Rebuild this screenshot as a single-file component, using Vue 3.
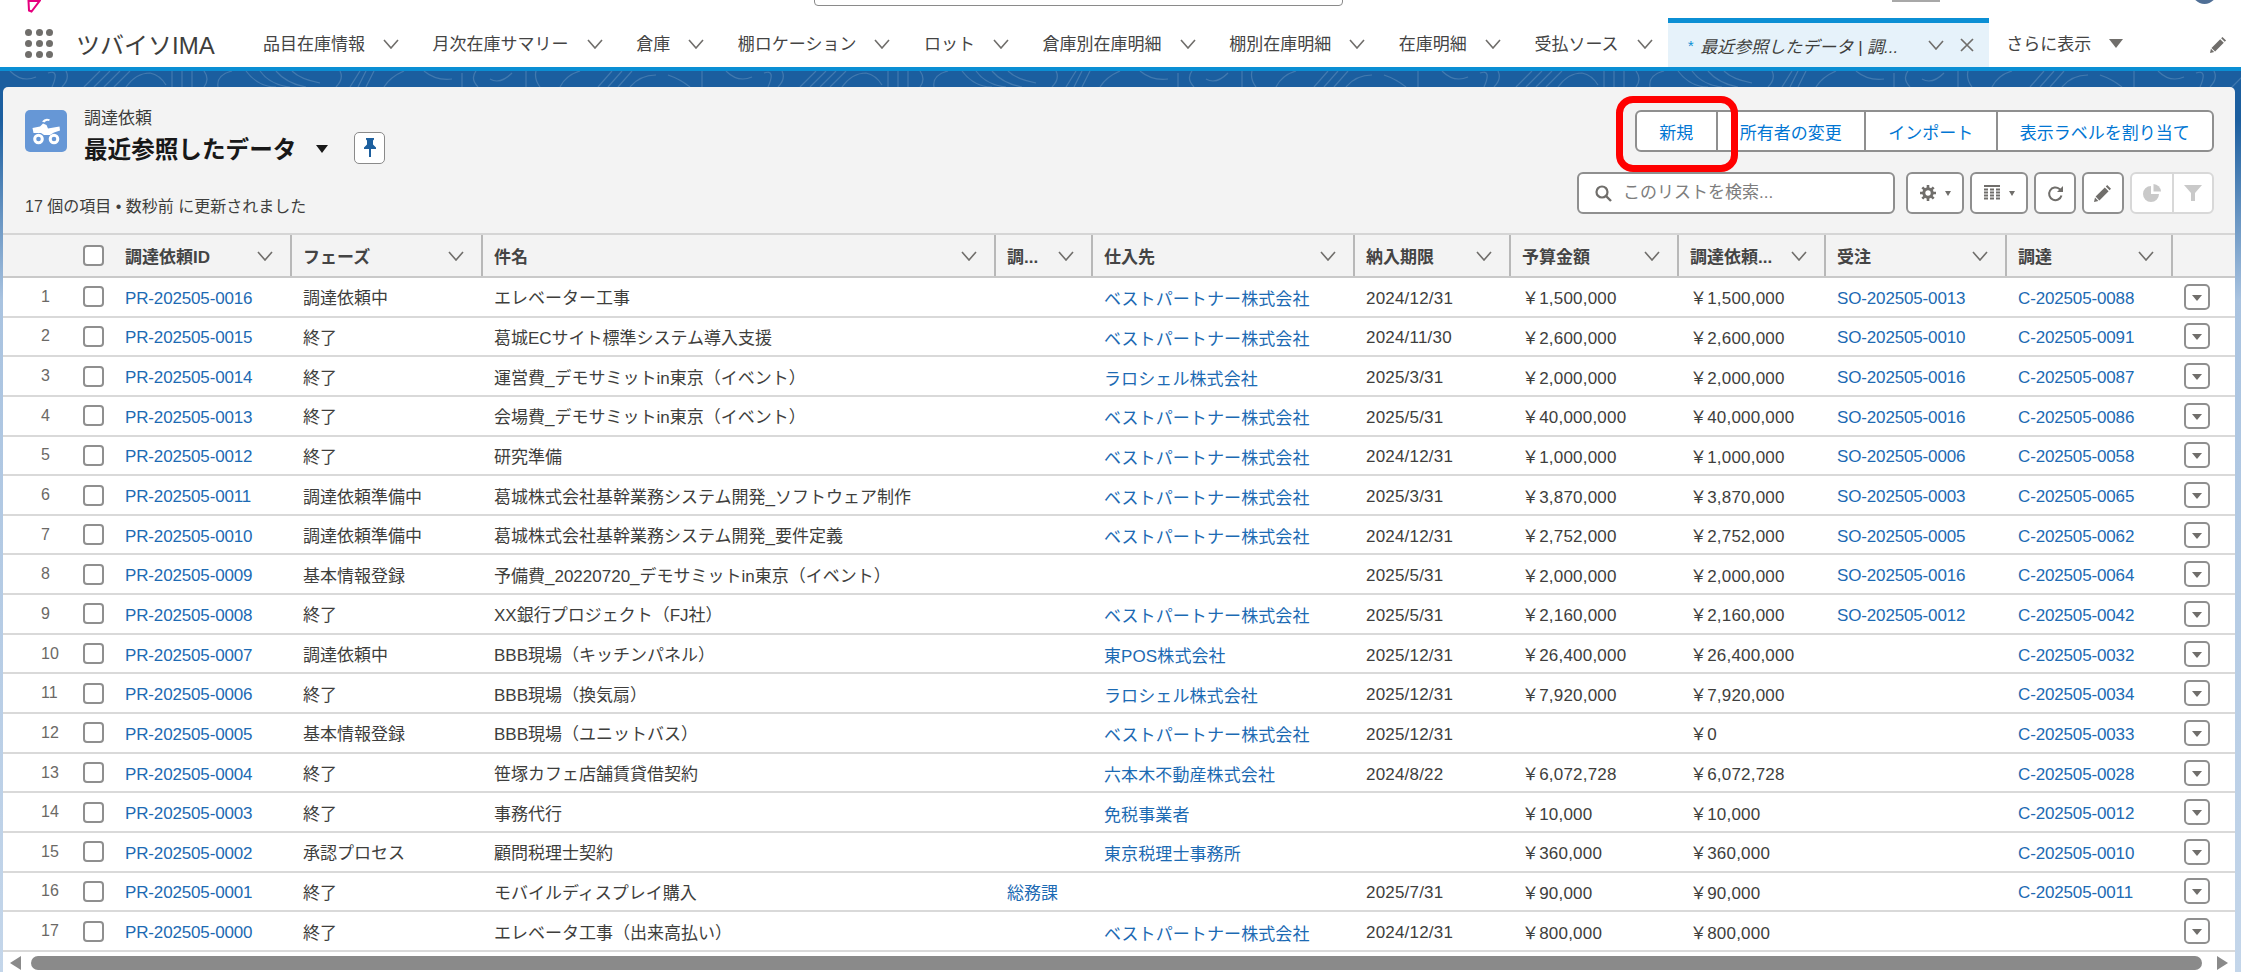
<script setup>
const navItems = ['品目在庫情報', '月次在庫サマリー', '倉庫', '棚ロケーション', 'ロット', '倉庫別在庫明細', '棚別在庫明細', '在庫明細', '受払ソース']

const columns = ['調達依頼ID', 'フェーズ', '件名', '調...', '仕入先', '納入期限', '予算金額', '調達依頼...', '受注', '調達']

const BEST = 'ベストパートナー株式会社'
const ROCH = 'ラロシェル株式会社'

// id, phase, subject, dept, vendor, due, budget, amount, order, contract
const rows = [
  ['0016', '調達依頼中', 'エレベーター工事', '', BEST, '2024/12/31', '1,500,000', '1,500,000', '0013', '0088'],
  ['0015', '終了', '葛城ECサイト標準システム導入支援', '', BEST, '2024/11/30', '2,600,000', '2,600,000', '0010', '0091'],
  ['0014', '終了', '運営費_デモサミットin東京（イベント）', '', ROCH, '2025/3/31', '2,000,000', '2,000,000', '0016', '0087'],
  ['0013', '終了', '会場費_デモサミットin東京（イベント）', '', BEST, '2025/5/31', '40,000,000', '40,000,000', '0016', '0086'],
  ['0012', '終了', '研究準備', '', BEST, '2024/12/31', '1,000,000', '1,000,000', '0006', '0058'],
  ['0011', '調達依頼準備中', '葛城株式会社基幹業務システム開発_ソフトウェア制作', '', BEST, '2025/3/31', '3,870,000', '3,870,000', '0003', '0065'],
  ['0010', '調達依頼準備中', '葛城株式会社基幹業務システム開発_要件定義', '', BEST, '2024/12/31', '2,752,000', '2,752,000', '0005', '0062'],
  ['0009', '基本情報登録', '予備費_20220720_デモサミットin東京（イベント）', '', '', '2025/5/31', '2,000,000', '2,000,000', '0016', '0064'],
  ['0008', '終了', 'XX銀行プロジェクト（FJ社）', '', BEST, '2025/5/31', '2,160,000', '2,160,000', '0012', '0042'],
  ['0007', '調達依頼中', 'BBB現場（キッチンパネル）', '', '東POS株式会社', '2025/12/31', '26,400,000', '26,400,000', '', '0032'],
  ['0006', '終了', 'BBB現場（換気扇）', '', ROCH, '2025/12/31', '7,920,000', '7,920,000', '', '0034'],
  ['0005', '基本情報登録', 'BBB現場（ユニットバス）', '', BEST, '2025/12/31', '', '0', '', '0033'],
  ['0004', '終了', '笹塚カフェ店舗賃貸借契約', '', '六本木不動産株式会社', '2024/8/22', '6,072,728', '6,072,728', '', '0028'],
  ['0003', '終了', '事務代行', '', '免税事業者', '', '10,000', '10,000', '', '0012'],
  ['0002', '承認プロセス', '顧問税理士契約', '', '東京税理士事務所', '', '360,000', '360,000', '', '0010'],
  ['0001', '終了', 'モバイルディスプレイ購入', '総務課', '', '2025/7/31', '90,000', '90,000', '', '0011'],
  ['0000', '終了', 'エレベータ工事（出来高払い）', '', BEST, '2024/12/31', '800,000', '800,000', '', '']
]
</script>

<template>
  <div class="page">
    <header class="topbar">
      <div class="global">
        <svg class="mark" viewBox="0 0 14 13"><path d="M1.5 1H12.5L4.5 11.5L2 10.5Z" fill="none" stroke="#e6007e" stroke-width="2" /></svg>
        <div class="global-search"></div>
        <div class="global-chip"></div>
        <div class="avatar"></div>
      </div>
      <nav class="nav">
        <div class="launcher">
          <span v-for="n in 9" :key="n"></span>
        </div>
        <div class="app-name">ツバイソIMA</div>
        <div v-for="item in navItems" :key="item" class="nav-item">
          <span>{{ item }}</span>
          <svg class="chev" viewBox="0 0 16 10"><path d="M1 1L8 9L15 1" /></svg>
        </div>
        <div class="nav-tab">
          <span class="tab-star">*</span>
          <span class="tab-text">最近参照したデータ | 調...</span>
          <svg class="chev tab-chev" viewBox="0 0 16 10"><path d="M1 1L8 9L15 1" /></svg>
          <svg class="tab-x" viewBox="0 0 14 14"><path d="M1 1L13 13M13 1L1 13" /></svg>
        </div>
        <div class="nav-more">
          <span>さらに表示</span>
          <i class="more-caret"></i>
        </div>
        <svg class="nav-edit" viewBox="0 0 18 18"><path d="M13.2 1L17 4.8L15.6 6.2L11.8 2.4ZM10.8 3.4L14.6 7.2L5.4 16.4L1.6 12.6ZM1 13.6L4.4 17L0 18Z" /></svg>
      </nav>
    </header>

    <div class="band">
      <svg width="100%" height="16">
        <defs>
          <pattern id="contour" width="716" height="16" patternUnits="userSpaceOnUse">
            <path d="M10 0Q22 12 36 6M48 2Q60 -2 52 16M66 0Q70 8 62 16M84 16L100 0M94 16L110 0M104 16L120 0M114 16L130 0M126 16Q136 2 150 2Q160 4 166 14M172 0V16M182 0V16M192 0V16M204 16Q210 8 204 0M218 16Q216 4 232 0M246 0Q258 16 276 16M260 0Q270 14 290 16M276 0Q286 12 306 16M292 0Q300 8 320 12M336 16Q344 8 340 0M350 16L360 0M358 16L366 0M366 16L374 0M384 16Q390 6 404 0M424 0Q436 10 452 8M462 16V2M476 0Q470 8 478 16M490 8Q500 14 512 2M526 0V16M536 0Q534 8 540 16M560 16Q566 4 580 0M598 16L612 0M608 16L622 0M618 16L632 0M630 16Q640 4 656 4M668 4Q680 8 690 16M702 0V16" fill="none" stroke="rgba(255,255,255,0.17)" stroke-width="1.2" />
          </pattern>
        </defs>
        <rect width="100%" height="16" fill="url(#contour)" />
      </svg>
    </div>

    <main class="panel">
      <section class="list-head">
        <div class="head-row">
          <div class="head-left">
            <div class="obj-icon">
              <svg viewBox="0 0 42 42" width="42" height="42">
                <path d="M17 11.5Q20 7.5 25 9.5L24 11Q21 10 19.5 12.5Z" fill="#fff" />
                <path d="M7.5 18L15 16.5L18 13.5L21.5 15L23 18.5L34.5 16.5L35 20.5L29 22.5L25 25H19L16 23H8.5Z" fill="#fff" />
                <circle cx="13.5" cy="29" r="3.8" fill="none" stroke="#fff" stroke-width="3" />
                <circle cx="29" cy="29" r="3.8" fill="none" stroke="#fff" stroke-width="3" />
              </svg>
            </div>
            <div class="title-box">
              <div class="obj-label">調達依頼</div>
              <div class="title-row">
                <h1 class="title">最近参照したデータ</h1>
                <i class="title-caret"></i>
                <button class="pin-btn">
                  <svg viewBox="0 0 12 19" width="12" height="19"><path d="M2 0H10V1.6L9 2.6V6.5L12 9.5V11H0V9.5L3 6.5V2.6L2 1.6ZM5 11H7V19H5Z" fill="#1d5f9e" /></svg>
                </button>
              </div>
            </div>
          </div>
          <div class="actions">
            <button class="act">新規</button>
            <button class="act">所有者の変更</button>
            <button class="act">インポート</button>
            <button class="act">表示ラベルを割り当て</button>
            <div class="callout"></div>
          </div>
        </div>
        <div class="tool-row">
          <div class="meta">17 個の項目 • 数秒前 に更新されました</div>
          <div class="list-search">
            <svg viewBox="0 0 17 17" width="17" height="17"><circle cx="7" cy="7" r="5.5" fill="none" stroke="#706e6b" stroke-width="2.2" /><path d="M11 11L16 16" stroke="#706e6b" stroke-width="2.4" /></svg>
            <input placeholder="このリストを検索..." />
          </div>
          <button class="tool wide">
            <svg viewBox="0 0 16 16" width="16" height="16"><circle cx="8" cy="8" r="4.2" fill="none" stroke="#706e6b" stroke-width="3" /><path d="M8 0V3M8 13V16M0 8H3M13 8H16M2.3 2.3L4.4 4.4M11.6 11.6L13.7 13.7M13.7 2.3L11.6 4.4M4.4 11.6L2.3 13.7" stroke="#706e6b" stroke-width="2.6" /></svg>
            <i class="tool-caret"></i>
          </button>
          <button class="tool wide tbl">
            <svg viewBox="0 0 16 16" width="16" height="16"><path d="M0 0H16V2H0Z" fill="#706e6b" /><path d="M0 4.5H16M0 7.5H16M0 10.5H16M0 13.5H16" stroke="#706e6b" stroke-width="2" stroke-dasharray="4 2" /></svg>
            <i class="tool-caret"></i>
          </button>
          <button class="tool">
            <svg viewBox="0 0 17 17" width="17" height="17"><path d="M14.5 10.5A6.3 6.3 0 1 1 12.5 4L15 5.5" fill="none" stroke="#706e6b" stroke-width="2" /><path d="M16 1V7H10Z" fill="#706e6b" /></svg>
          </button>
          <button class="tool">
            <svg viewBox="0 0 18 18" width="18" height="18"><path d="M13.2 1L17 4.8L15.6 6.2L11.8 2.4ZM10.8 3.4L14.6 7.2L5.4 16.4L1.6 12.6ZM1 13.6L4.4 17L0 18Z" fill="#706e6b" /></svg>
          </button>
          <div class="tool-group">
            <button class="tool-off">
              <svg viewBox="0 0 18 18" width="18" height="18"><path d="M8 2V10H16A8 8 0 1 1 8 2Z" fill="#c9c9c9" /><path d="M10.5 0A8 8 0 0 1 18 7.5H10.5Z" fill="#c9c9c9" /></svg>
            </button>
            <button class="tool-off">
              <svg viewBox="0 0 18 16" width="18" height="16"><path d="M0 0H18L11 8V16H7V8Z" fill="#c9c9c9" /></svg>
            </button>
          </div>
        </div>
      </section>

      <section class="table">
        <div class="tr head">
          <div></div>
          <div class="check-cell"><span class="check"></span></div>
          <div v-for="col in columns" :key="col" class="th">
            <span>{{ col }}</span>
            <svg class="chev" viewBox="0 0 16 10"><path d="M1 1L8 9L15 1" /></svg>
          </div>
          <div></div>
        </div>
        <div v-for="(row, i) in rows" :key="row[0]" class="tr">
          <div class="num">{{ i + 1 }}</div>
          <div class="check-cell"><span class="check"></span></div>
          <div class="td latin"><a>PR-202505-{{ row[0] }}</a></div>
          <div class="td">{{ row[1] }}</div>
          <div class="td">{{ row[2] }}</div>
          <div class="td"><a>{{ row[3] }}</a></div>
          <div class="td vendor"><a>{{ row[4] }}</a></div>
          <div class="td date">{{ row[5] }}</div>
          <div class="td money">{{ row[6] ? '￥' + row[6] : '' }}</div>
          <div class="td money">{{ row[7] ? '￥' + row[7] : '' }}</div>
          <div class="td latin"><a v-if="row[8]">SO-202505-{{ row[8] }}</a></div>
          <div class="td latin"><a v-if="row[9]">C-202505-{{ row[9] }}</a></div>
          <div class="row-act"><button class="row-btn"><i></i></button></div>
        </div>
      </section>

      <div class="hscroll">
        <i class="arrow left"></i>
        <div class="thumb"></div>
        <i class="arrow right"></i>
      </div>
    </main>
  </div>
</template>

<style scoped>
.page {
  width: 2241px;
  height: 972px;
  overflow: hidden;
  display: flex;
  flex-direction: column;
  font-family: "Liberation Sans", "Noto Sans CJK JP", sans-serif;
  font-size: 17px;
  color: #3e3e3c;
  background: linear-gradient(180deg, #1b5e9f 0, #1b5e9f 120px, #a9c3e0 300px, #c4d6ea 972px);
}

.topbar {
  height: 67px;
  background: #fff;
  flex: none;
}

.global {
  height: 18px;
  display: flex;
  padding-left: 27px;
}

.mark {
  width: 14px;
  height: 13px;
}

.global-search {
  width: 529px;
  height: 40px;
  margin: -34px 0 0 773px;
  border: 1.5px solid #8a8a8a;
  border-radius: 4px;
  box-sizing: border-box;
}

.global-chip {
  width: 48px;
  height: 2px;
  margin-left: 549px;
  background: #a8a8a8;
}

.avatar {
  width: 25px;
  height: 25px;
  margin: -21.5px 0 0 252px;
  border-radius: 50%;
  background: #4f6f96;
}

.nav {
  height: 49px;
  display: flex;
  align-items: center;
  padding-left: 25px;
}

.launcher {
  width: 28px;
  display: grid;
  grid-template-columns: repeat(3, 7px);
  grid-auto-rows: 7px;
  justify-content: space-between;
  row-gap: 4px;
  margin-top: 2px;
}

.launcher span {
  border-radius: 50%;
  background: #706e6b;
}

.app-name {
  font-size: 24px;
  margin: 2px 31.5px 0 23px;
  white-space: nowrap;
}

.nav-item {
  display: flex;
  align-items: center;
  padding: 0 16.8px;
  white-space: nowrap;
  color: #444;
}

.chev {
  width: 16px;
  height: 10px;
  flex: none;
  fill: none;
  stroke: #706e6b;
  stroke-width: 1.6;
}

.nav-item .chev {
  margin: 2px 0 0 18px;
}

.nav-tab {
  width: 321px;
  height: 49px;
  box-sizing: border-box;
  margin-left: -1px;
  padding: 0 15px 0 19px;
  display: flex;
  align-items: center;
  background: #e6f2fa;
  border-top: 5px solid #0b8fd4;
  font-style: italic;
  white-space: nowrap;
}

.tab-star {
  color: #0b8fd4;
  font-size: 15px;
  margin-right: 7px;
}

.tab-chev {
  margin-left: auto;
}

.tab-x {
  width: 14px;
  height: 14px;
  margin-left: 16px;
  fill: none;
  stroke: #706e6b;
  stroke-width: 1.7;
}

.nav-more {
  display: flex;
  align-items: center;
  margin-left: 17px;
  color: #444;
}

.more-caret {
  margin: 2px 0 0 18px;
  border-style: solid;
  border-width: 9px 7px 0;
  border-color: #706e6b transparent transparent;
}

.nav-edit {
  width: 17px;
  height: 17px;
  margin: 3px 0 0 87px;
  fill: #706e6b;
}

.band {
  flex: none;
  height: 16px;
  border-top: 4px solid #0b8fd4;
  background: #1b5e9f;
}

.band svg {
  display: block;
}

.panel {
  flex: 1;
  margin: 0 6px 0 3px;
  border-radius: 5px 5px 0 0;
  background: #f3f3f3;
  display: flex;
  flex-direction: column;
}

.list-head {
  padding: 23px 21px 19px 22px;
}

.head-row {
  display: flex;
  justify-content: space-between;
  align-items: flex-start;
}

.head-left {
  display: flex;
  gap: 17px;
}

.obj-icon {
  width: 42px;
  height: 42px;
  border-radius: 5px;
  background: #6697d6;
}

.obj-icon svg {
  display: block;
}

.obj-label {
  height: 17px;
  line-height: 17px;
}

.title-row {
  height: 35px;
  margin-top: 3px;
  display: flex;
  align-items: center;
}

.title {
  margin: 0;
  font-size: 23.6px;
  font-weight: 700;
  color: #181818;
  white-space: nowrap;
}

.title-caret {
  margin: 2px 0 0 20px;
  border-style: solid;
  border-width: 8px 6.5px 0;
  border-color: #181818 transparent transparent;
}

.pin-btn {
  width: 31px;
  height: 32px;
  margin-left: 26px;
  padding: 0;
  display: flex;
  align-items: center;
  justify-content: center;
  background: #fff;
  border: 1.5px solid #8a8a8a;
  border-radius: 5px;
}

.actions {
  position: relative;
  display: flex;
  height: 42px;
  background: #fff;
  border: 2px solid #8f8f8f;
  border-radius: 6px;
  box-sizing: border-box;
}

.act {
  padding: 0 22.25px;
  border: 0;
  border-left: 2px solid #8f8f8f;
  background: transparent;
  color: #0176d3;
  font: inherit;
  white-space: nowrap;
}

.act:first-child {
  border-left: 0;
}

.callout {
  position: absolute;
  left: -21px;
  top: -16px;
  width: 122px;
  height: 76px;
  box-sizing: border-box;
  border: 7px solid #f00;
  border-radius: 17px;
  pointer-events: none;
}

.tool-row {
  display: flex;
  align-items: flex-start;
  margin-top: 7px;
}

.meta {
  padding-top: 27px;
  line-height: 15px;
  font-size: 16px;
  margin-right: auto;
  white-space: nowrap;
}

.list-search {
  width: 318px;
  height: 42px;
  box-sizing: border-box;
  display: flex;
  align-items: center;
  gap: 11px;
  padding-left: 16px;
  background: #fff;
  border: 2px solid #8f8f8f;
  border-radius: 6px;
}

.list-search input {
  flex: 1;
  min-width: 0;
  border: 0;
  outline: 0;
  padding: 0;
  background: transparent;
  font: inherit;
}

.list-search input::placeholder {
  color: #7d7d7d;
  opacity: 1;
}

.tool {
  width: 42px;
  height: 42px;
  margin-left: 6px;
  padding: 0;
  box-sizing: border-box;
  display: flex;
  align-items: center;
  justify-content: center;
  background: #fff;
  border: 2px solid #8f8f8f;
  border-radius: 6px;
}

.tool.wide {
  width: 58px;
  gap: 9px;
}

.tool.wide:first-of-type {
  margin-left: 11px;
}

.tool-caret {
  border-style: solid;
  border-width: 5px 3.5px 0;
  border-color: #706e6b transparent transparent;
}

.tool-group {
  display: flex;
  margin-left: 6px;
  height: 42px;
  box-sizing: border-box;
  background: #fff;
  border: 2px solid #d8d8d8;
  border-radius: 6px;
}

.tool-off {
  width: 40px;
  padding: 0;
  display: flex;
  align-items: center;
  justify-content: center;
  background: transparent;
  border: 0;
}

.tool-off + .tool-off {
  border-left: 2px solid #d8d8d8;
}

.table {
  --cols: 70px 41px 178px 191px 513px 97px 262px 156px 168px 147px 181px 166px 62px;
  background: #fff;
}

.tr {
  display: grid;
  grid-template-columns: var(--cols);
  height: 39.65px;
  box-sizing: border-box;
  align-items: center;
  border-bottom: 2px solid #d9d9d9;
}

.tr.head {
  height: 45px;
  align-items: stretch;
  background: #f3f3f3;
  border-top: 2px solid #d5d5d5;
  border-bottom: 2px solid #c9c9c9;
  font-weight: 700;
  color: #444;
}

.check-cell {
  display: flex;
  align-items: center;
}

.check {
  width: 21px;
  height: 21px;
  margin-left: 10px;
  box-sizing: border-box;
  background: #fff;
  border: 2px solid #8f8f8f;
  border-radius: 4px;
}

.th {
  display: flex;
  align-items: center;
  justify-content: space-between;
  padding: 0 17px 0 11px;
  border-right: 2px solid #b8b8b8;
  white-space: nowrap;
  overflow: hidden;
}

.num {
  padding-left: 38px;
  font-size: 16px;
  color: #6b6966;
}

.td {
  padding-left: 11px;
  white-space: nowrap;
  overflow: hidden;
}

.td.latin {
  padding-top: 4px;
  letter-spacing: -0.15px;
}

.td.date {
  padding-top: 4px;
  letter-spacing: 0.2px;
}

.td.money {
  letter-spacing: 0.2px;
}

.td.vendor {
  padding-top: 2px;
  letter-spacing: 0.1px;
}

.td a {
  color: #1c6ab3;
}

.row-act {
  display: flex;
  padding-left: 11px;
}

.row-btn {
  width: 26px;
  height: 26px;
  padding: 0;
  display: flex;
  align-items: center;
  justify-content: center;
  background: #fff;
  border: 2px solid #8f8f8f;
  border-radius: 5px;
}

.row-btn i {
  margin-top: 2px;
  border-style: solid;
  border-width: 6px 5px 0;
  border-color: #706e6b transparent transparent;
}

.hscroll {
  flex: 1;
  display: flex;
  align-items: center;
  padding: 4px 7px 1px 7px;
  background: #fff;
}

.arrow {
  border-style: solid;
  border-color: transparent;
}

.arrow.left {
  border-width: 7px 11px 7px 0;
  border-right-color: #8a8a8a;
}

.arrow.right {
  border-width: 7px 0 7px 11px;
  border-left-color: #8a8a8a;
}

.thumb {
  flex: 1;
  height: 14px;
  margin: 0 15px 0 10px;
  border-radius: 7px;
  background: #8a8a8a;
}
</style>

<style>
html,
body {
  margin: 0;
  overflow: hidden;
}
</style>
